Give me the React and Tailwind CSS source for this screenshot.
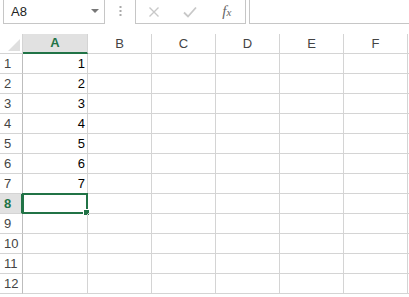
import React from "react";

const cols = ["A", "B", "C", "D", "E", "F"];
const colW = ["w-[65px]", "w-[64px]", "w-[64px]", "w-[64px]", "w-[64px]", "w-[64px]"];
const rows = [1, 2, 3, 4, 5, 6, 7, 8, 9, 10, 11, 12];

export default function App() {
  return (
    <div className="w-[409px] h-[297px] overflow-hidden bg-white text-[13px] text-black" style={{ fontFamily: '"Liberation Sans", Arial, sans-serif' }}>
      {/* top bar */}
      <div className="flex h-[24px] -mt-px items-stretch">
        <div className="ml-[3px] w-[102px] h-[25px] border border-[#c6c6c6] flex items-center justify-between pl-[7px] pr-[5px]">
          <span className="text-[13px] text-[#222]">A8</span>
          <svg width="8" height="5" viewBox="0 0 8 5"><path d="M0 0h8L4 4z" fill="#777" /></svg>
        </div>
        <div className="w-[30px] flex items-center justify-center">
          <svg width="3" height="12" viewBox="0 0 3 12">
            <rect x="0.5" y="1" width="2" height="2" fill="#aaa" />
            <rect x="0.5" y="5" width="2" height="2" fill="#aaa" />
            <rect x="0.5" y="9" width="2" height="2" fill="#aaa" />
          </svg>
        </div>
        <div className="w-[111px] h-[25px] border border-[#c6c6c6] flex items-center">
          <div className="w-[37px] flex justify-center">
            <svg width="12" height="12" viewBox="0 0 12 12"><path d="M1.5 1.5l9 9M10.5 1.5l-9 9" stroke="#c8c8c8" strokeWidth="1.4" /></svg>
          </div>
          <div className="w-[37px] flex justify-center">
            <svg width="14" height="12" viewBox="0 0 14 12"><path d="M1 6.5l4 4L13 1.5" stroke="#c8c8c8" strokeWidth="1.8" fill="none" /></svg>
          </div>
          <div className="w-[37px] flex justify-center">
            <span className="italic text-[15px] text-[#666]" style={{ fontFamily: '"Liberation Serif", "Times New Roman", serif' }}>f<span className="text-[11px]">x</span></span>
          </div>
        </div>
        <div className="ml-[3px] flex-1 h-[25px] border border-[#c6c6c6] border-r-0" />
      </div>

      {/* gap */}
      <div className="h-[11px]" />

      {/* header row */}
      <div className="flex h-[20px]">
        <div className="w-[23px] shrink-0 border-r border-[#d4d4d4] border-b border-b-[#d4d4d4] relative">
          <svg className="absolute right-[2px] bottom-[2px]" width="12" height="12" viewBox="0 0 12 12"><path d="M12 0V12H0z" fill="#dfdfdf" /></svg>
        </div>
        {cols.map((c, i) => (
          <div
            key={c}
            className={`${colW[i]} shrink-0 flex items-center justify-center border-r border-[#d4d4d4] ${
              i === 0 ? "bg-[#e1e1e1] border-b-2 border-b-[#217346] text-[#217346] font-bold" : "border-b border-b-[#d4d4d4] text-[#444]"
            }`}
          >
            {c}
          </div>
        ))}
        <div className="flex-1 border-b border-b-[#d4d4d4]" />
      </div>

      {/* rows */}
      {rows.map((r) => (
        <div key={r} className="flex h-[20px]">
          <div
            className={`w-[23px] shrink-0 flex items-center pl-[4px] border-b border-[#d4d4d4] ${
              r === 8 ? "bg-[#e1e1e1] border-r-2 border-r-[#217346] text-[#217346] font-bold" : "border-r border-r-[#bdbdbd] text-[#444]"
            }`}
          >
            {r}
          </div>
          {cols.map((c, i) => (
            <div
              key={c}
              className={`${colW[i]} shrink-0 border-r border-b border-[#d4d4d4] flex items-center justify-end pr-[2px] relative`}
            >
              {i === 0 && r <= 7 ? r : ""}
              {i === 0 && r === 8 ? (
                <>
                  <div className="absolute left-[-1px] top-[-1px] right-[-1px] bottom-[-1px] border-2 border-[#217346]" />
                  <div className="absolute right-[-3px] bottom-[-3px] w-[5px] h-[5px] bg-[#217346] border border-white box-content" />
                </>
              ) : null}
            </div>
          ))}
          <div className="flex-1 border-b border-[#d4d4d4]" />
        </div>
      ))}
    </div>
  );
}
